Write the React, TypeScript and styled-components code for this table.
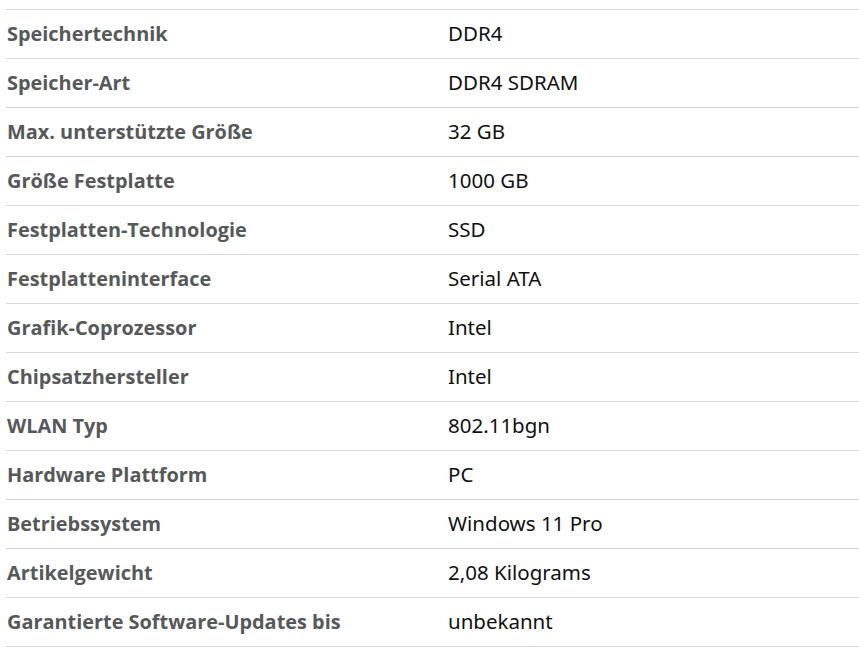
import React from "react";
import styled, { createGlobalStyle } from "styled-components";

const Global = createGlobalStyle`
  html, body { margin: 0; padding: 0; background: #fff; }
  body { font-family: "Open Sans", "Liberation Sans", sans-serif; }
`;

const Table = styled.div`
  margin: 9px 0 0 6px;
  width: 860px;
  border-top: 1px solid #d5d9d9;
`;

const Row = styled.div`
  display: grid;
  grid-template-columns: 441px 1fr;
  box-sizing: border-box;
  height: 49px;
  padding-bottom: 2px;
  align-items: center;
  border-bottom: 1px solid #d5d9d9;
`;

const Label = styled.div`
  padding-left: 1px;
  font-size: 19.9px;
  font-weight: 700;
  color: #565959;
  white-space: nowrap;
`;

const Value = styled.div`
  padding-left: 1px;
  font-family: "Noto Sans", "Open Sans", sans-serif;
  font-size: 20.5px;
  font-weight: 400;
  color: #0f1111;
  white-space: nowrap;
`;

const rows: [string, string][] = [
  ["Speichertechnik", "DDR4"],
  ["Speicher-Art", "DDR4 SDRAM"],
  ["Max. unterstützte Größe", "32 GB"],
  ["Größe Festplatte", "1000 GB"],
  ["Festplatten-Technologie", "SSD"],
  ["Festplatteninterface", "Serial ATA"],
  ["Grafik-Coprozessor", "Intel"],
  ["Chipsatzhersteller", "Intel"],
  ["WLAN Typ", "802.11bgn"],
  ["Hardware Plattform", "PC"],
  ["Betriebssystem", "Windows 11 Pro"],
  ["Artikelgewicht", "2,08 Kilograms"],
  ["Garantierte Software-Updates bis", "unbekannt"],
];

export default function App() {
  return (
    <>
      <Global />
      <Table>
        {rows.map(([l, v]) => (
          <Row key={l}>
            <Label>{l}</Label>
            <Value>{v}</Value>
          </Row>
        ))}
      </Table>
    </>
  );
}
